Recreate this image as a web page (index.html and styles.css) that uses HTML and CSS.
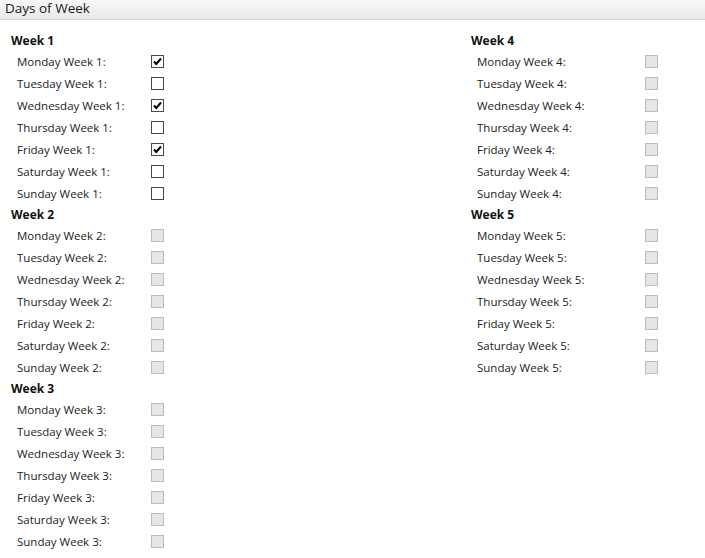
FILE: index.html
```html
<!DOCTYPE html>
<html>
<head>
<meta charset="utf-8">
<link rel="stylesheet" href="styles.css">
</head>
<body>
<div class="header">Days of Week</div>
<div class="content">
  <div class="col col-left">
    <div class="week">Week 1</div>
    <div class="row"><span class="lbl">Monday Week 1:</span><span class="cb on"><svg viewBox="0 0 11 11"><path d="M2 5.5 L4.3 8 L9 2.5" /></svg></span></div>
    <div class="row"><span class="lbl">Tuesday Week 1:</span><span class="cb"></span></div>
    <div class="row"><span class="lbl">Wednesday Week 1:</span><span class="cb on"><svg viewBox="0 0 11 11"><path d="M2 5.5 L4.3 8 L9 2.5" /></svg></span></div>
    <div class="row"><span class="lbl">Thursday Week 1:</span><span class="cb"></span></div>
    <div class="row"><span class="lbl">Friday Week 1:</span><span class="cb on"><svg viewBox="0 0 11 11"><path d="M2 5.5 L4.3 8 L9 2.5" /></svg></span></div>
    <div class="row"><span class="lbl">Saturday Week 1:</span><span class="cb"></span></div>
    <div class="row"><span class="lbl">Sunday Week 1:</span><span class="cb"></span></div>
    <div class="week">Week 2</div>
    <div class="row"><span class="lbl">Monday Week 2:</span><span class="cb dis"></span></div>
    <div class="row"><span class="lbl">Tuesday Week 2:</span><span class="cb dis"></span></div>
    <div class="row"><span class="lbl">Wednesday Week 2:</span><span class="cb dis"></span></div>
    <div class="row"><span class="lbl">Thursday Week 2:</span><span class="cb dis"></span></div>
    <div class="row"><span class="lbl">Friday Week 2:</span><span class="cb dis"></span></div>
    <div class="row"><span class="lbl">Saturday Week 2:</span><span class="cb dis"></span></div>
    <div class="row"><span class="lbl">Sunday Week 2:</span><span class="cb dis"></span></div>
    <div class="week">Week 3</div>
    <div class="row"><span class="lbl">Monday Week 3:</span><span class="cb dis"></span></div>
    <div class="row"><span class="lbl">Tuesday Week 3:</span><span class="cb dis"></span></div>
    <div class="row"><span class="lbl">Wednesday Week 3:</span><span class="cb dis"></span></div>
    <div class="row"><span class="lbl">Thursday Week 3:</span><span class="cb dis"></span></div>
    <div class="row"><span class="lbl">Friday Week 3:</span><span class="cb dis"></span></div>
    <div class="row"><span class="lbl">Saturday Week 3:</span><span class="cb dis"></span></div>
    <div class="row"><span class="lbl">Sunday Week 3:</span><span class="cb dis"></span></div>
  </div>
  <div class="col col-right">
    <div class="week">Week 4</div>
    <div class="row"><span class="lbl">Monday Week 4:</span><span class="cb dis"></span></div>
    <div class="row"><span class="lbl">Tuesday Week 4:</span><span class="cb dis"></span></div>
    <div class="row"><span class="lbl">Wednesday Week 4:</span><span class="cb dis"></span></div>
    <div class="row"><span class="lbl">Thursday Week 4:</span><span class="cb dis"></span></div>
    <div class="row"><span class="lbl">Friday Week 4:</span><span class="cb dis"></span></div>
    <div class="row"><span class="lbl">Saturday Week 4:</span><span class="cb dis"></span></div>
    <div class="row"><span class="lbl">Sunday Week 4:</span><span class="cb dis"></span></div>
    <div class="week">Week 5</div>
    <div class="row"><span class="lbl">Monday Week 5:</span><span class="cb dis"></span></div>
    <div class="row"><span class="lbl">Tuesday Week 5:</span><span class="cb dis"></span></div>
    <div class="row"><span class="lbl">Wednesday Week 5:</span><span class="cb dis"></span></div>
    <div class="row"><span class="lbl">Thursday Week 5:</span><span class="cb dis"></span></div>
    <div class="row"><span class="lbl">Friday Week 5:</span><span class="cb dis"></span></div>
    <div class="row"><span class="lbl">Saturday Week 5:</span><span class="cb dis"></span></div>
    <div class="row"><span class="lbl">Sunday Week 5:</span><span class="cb dis"></span></div>
  </div>
</div>
</body>
</html>
```
FILE: styles.css
```css
html, body {
  margin: 0;
  padding: 0;
  background: #ffffff;
}
body {
  font-family: "Open Sans", "Noto Sans", sans-serif;
  color: #1e1e1e;
  width: 705px;
  height: 558px;
  overflow: hidden;
}
.header {
  height: 20px;
  box-sizing: border-box;
  border-bottom: 1px solid #d6d6d6;
  background: linear-gradient(to bottom, #f7f7f7, #e9e9e9);
  font-size: 13.5px;
  line-height: 17px;
  padding-left: 5px;
  color: #1a1a1a;
}
.content {
  display: grid;
  grid-template-columns: 460px 1fr;
  padding: 10px 0 0 11px;
}
.week {
  height: 20px;
  line-height: 22px;
  font-weight: 700;
  font-size: 12px;
  color: #111;
}
.row {
  display: flex;
  align-items: center;
  height: 22px;
  font-size: 11.5px;
  padding-left: 6px;
}
.col-left .lbl { width: 134px; }
.col-right .lbl { width: 168px; }
.lbl {
  color: #222;
  white-space: nowrap;
}
.cb {
  width: 13px;
  height: 13px;
  box-sizing: border-box;
  border: 1px solid #4a4a4a;
  background: #fff;
  display: flex;
  align-items: center;
  justify-content: center;
}
.cb svg {
  width: 11px;
  height: 11px;
}
.cb svg path {
  fill: none;
  stroke: #000;
  stroke-width: 2;
}
.cb.dis {
  border-color: #bcbcbc;
  background: #e6e6e6;
}
```
